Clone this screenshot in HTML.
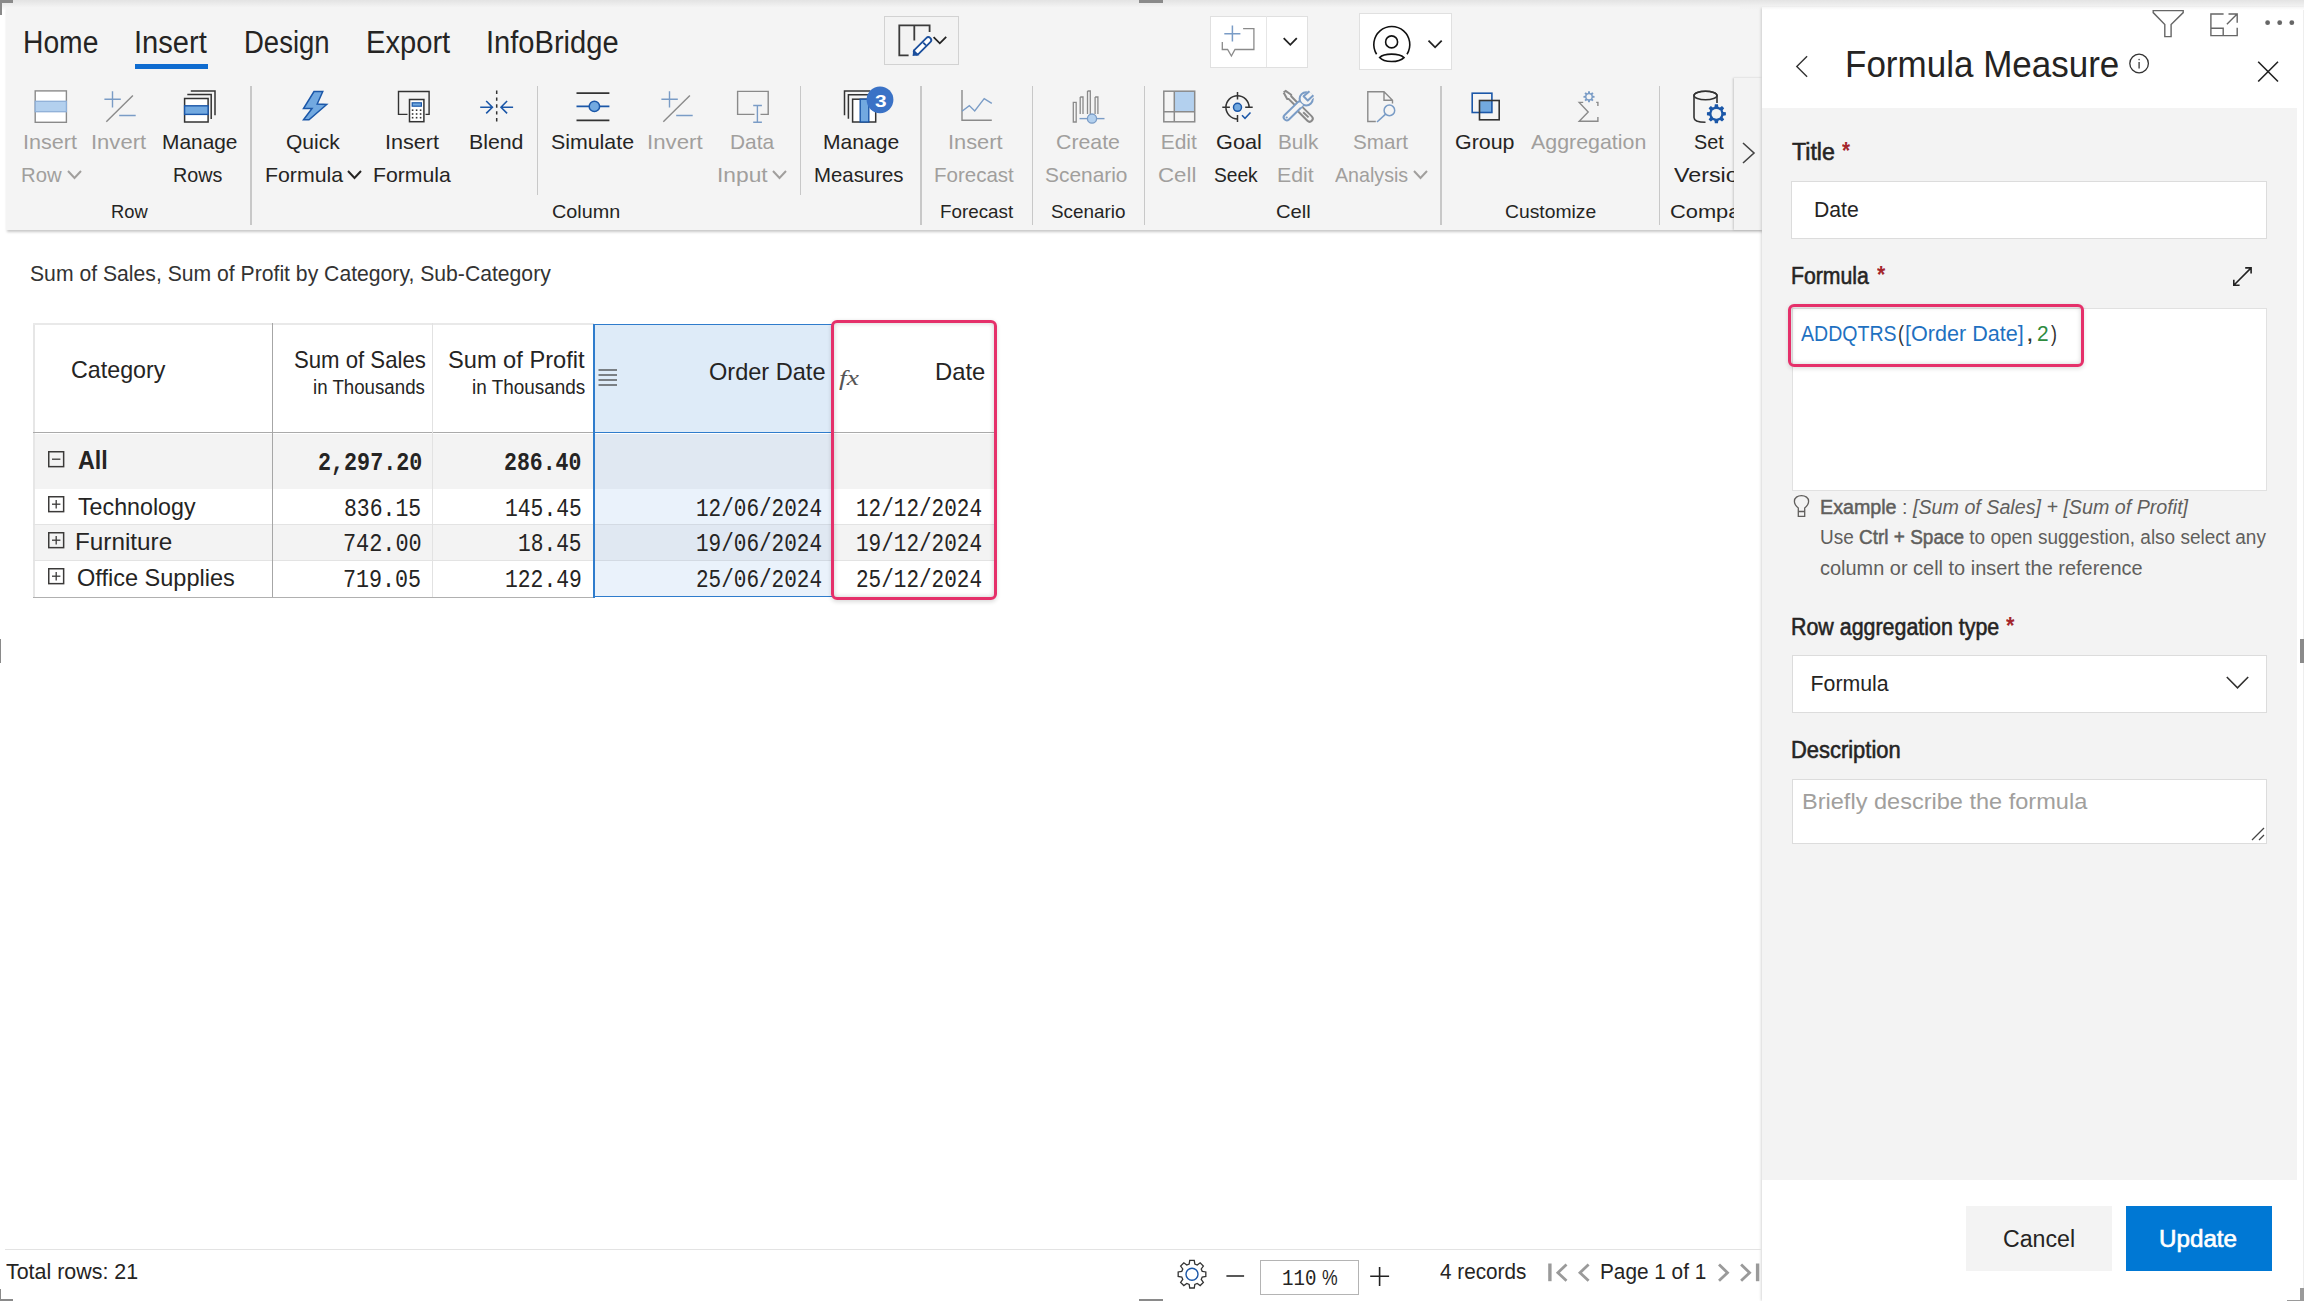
<!DOCTYPE html>
<html><head><meta charset="utf-8"><style>
html,body{margin:0;padding:0;width:2304px;height:1301px;overflow:hidden;background:#fff}
body{position:relative;font-family:'Liberation Sans', sans-serif}
.t{position:absolute;white-space:pre;transform-origin:0 0}
svg{overflow:visible}
</style></head><body>
<div style="position:absolute;left:0px;top:0px;width:2304px;height:10px;background:linear-gradient(#e3e3e3,#eeeeee 50%,#fdfdfd)"></div><div style="position:absolute;left:5.5px;top:6.5px;width:1756px;height:223.5px;background:#f4f4f4;box-shadow:0.5px 1.5px 2.5px rgba(0,0,0,0.22)"></div><div style="position:absolute;left:135px;top:64px;width:73px;height:5px;background:#0f6cd0"></div><div style="position:absolute;left:250.25px;top:86px;width:1.5px;height:139px;background:#c8c8c8"></div><div style="position:absolute;left:536.75px;top:86px;width:1.5px;height:109px;background:#c8c8c8"></div><div style="position:absolute;left:799.75px;top:86px;width:1.5px;height:109px;background:#c8c8c8"></div><div style="position:absolute;left:920.25px;top:86px;width:1.5px;height:139px;background:#c8c8c8"></div><div style="position:absolute;left:1031.75px;top:86px;width:1.5px;height:139px;background:#c8c8c8"></div><div style="position:absolute;left:1143.75px;top:86px;width:1.5px;height:139px;background:#c8c8c8"></div><div style="position:absolute;left:1440.25px;top:86px;width:1.5px;height:139px;background:#c8c8c8"></div><div style="position:absolute;left:1658.75px;top:86px;width:1.5px;height:139px;background:#c8c8c8"></div><svg style="position:absolute;left:65.7px;top:168.8px;" width="17" height="11" viewBox="0 0 17 11" fill="none"><polyline points="2,2 8.5,9 15,2" stroke="#a19f9d" stroke-width="2" fill="none"/></svg><svg style="position:absolute;left:346.2px;top:168.8px;" width="17" height="11" viewBox="0 0 17 11" fill="none"><polyline points="2,2 8.5,9 15,2" stroke="#252423" stroke-width="2" fill="none"/></svg><svg style="position:absolute;left:771.2px;top:168.8px;" width="17" height="11" viewBox="0 0 17 11" fill="none"><polyline points="2,2 8.5,9 15,2" stroke="#a19f9d" stroke-width="2" fill="none"/></svg><svg style="position:absolute;left:1412.0px;top:168.8px;" width="17" height="11" viewBox="0 0 17 11" fill="none"><polyline points="2,2 8.5,9 15,2" stroke="#a19f9d" stroke-width="2" fill="none"/></svg><div style="position:absolute;left:1733.5px;top:77.5px;width:28px;height:152.5px;background:#f3f3f3;box-shadow:-1.5px 0 2px rgba(0,0,0,0.18)"></div><svg style="position:absolute;left:1740px;top:140px;" width="18" height="26" viewBox="0 0 18 26" fill="none"><polyline points="3,3 14,13 3,23" stroke="#444" stroke-width="1.6" fill="none"/></svg><div style="position:absolute;left:884px;top:16px;width:75px;height:49px;border:1px solid #d2d2d2;box-sizing:border-box;background:#f3f3f3"></div><div style="position:absolute;left:1210px;top:15.5px;width:97.5px;height:52px;border:1px solid #e0e0e0;box-sizing:border-box;background:#fff"></div><div style="position:absolute;left:1265.5px;top:16px;width:1px;height:51px;background:#e6e6e6"></div><div style="position:absolute;left:1359px;top:13.3px;width:93px;height:56.7px;border:1px solid #e0e0e0;box-sizing:border-box;background:#fff"></div><div style="position:absolute;left:1761.5px;top:6.5px;width:542.5px;height:1294.5px;background:#fff;box-shadow:-1.5px 0 2.5px rgba(0,0,0,0.16)"></div><div style="position:absolute;left:2302.6px;top:10px;width:1.4px;height:1291px;background:#eeeeee"></div><div style="position:absolute;left:1740px;top:0px;width:564px;height:10px;background:linear-gradient(#e3e3e3,#f0f0f0 55%,rgba(255,255,255,0))"></div><div style="position:absolute;left:1762px;top:107.7px;width:535px;height:1072.6px;background:#f3f3f3"></div><svg style="position:absolute;left:0;top:0" width="2304" height="1301" viewBox="0 0 2304 1301" fill="none"><rect x="35.2" y="90.9" width="31.2" height="31.4" fill="#fff" stroke="#8a8a8a" stroke-width="1.4"/><rect x="35.2" y="101.3" width="31.2" height="10.4" fill="#b3d0ee" stroke="#8fb0d8" stroke-width="1.3"/><path d="M104.4 99.3H120.8M112.5 91.2V107.4M119.2 115.5H135.7" stroke="#7a9cc6" stroke-width="1.4"/><path d="M106.3 121.7L132.9 95.5" stroke="#8a8a8a" stroke-width="1.4"/><path d="M661.4 99.3H677.8M669.5 91.2V107.4M676.2 115.5H692.7" stroke="#7a9cc6" stroke-width="1.4"/><path d="M663.3 121.7L689.9 95.5" stroke="#8a8a8a" stroke-width="1.4"/><path d="M190.8 90.9H215.0V115.3M187.3 94.5H211.2V119.1" stroke="#333" stroke-width="1.5"/><rect x="184.6" y="98.5" width="23.5" height="23.5" fill="#fff" stroke="#333" stroke-width="1.5"/><rect x="184.6" y="105.8" width="23.5" height="8.6" fill="#72a9e0" stroke="#1b57a8" stroke-width="1.4"/><path d="M314.0 91.5L322.75 91.5L317.2 104L326.7 104.5L309 119.7L303.5 119.7L312 108.5L303.5 108.5Z" fill="#72a9e0" stroke="#1b57a8" stroke-width="1.5" stroke-linejoin="miter"/><path d="M407.5 114.4H398.5V91.5H429.1V114.4H425.5" stroke="#333" stroke-width="1.4"/><rect x="409.5" y="99.5" width="14.4" height="22.2" fill="#fff" stroke="#333" stroke-width="1.5"/><rect x="412.2" y="102.8" width="9.2" height="3.4" fill="#72a9e0" stroke="#1b57a8" stroke-width="1.2"/><rect x="411.8" y="109.4" width="1.6" height="1.6" fill="#333"/><rect x="415.8" y="109.4" width="1.6" height="1.6" fill="#333"/><rect x="419.8" y="109.4" width="1.6" height="1.6" fill="#333"/><rect x="411.8" y="113.2" width="1.6" height="1.6" fill="#333"/><rect x="415.8" y="113.2" width="1.6" height="1.6" fill="#333"/><rect x="419.8" y="113.2" width="1.6" height="1.6" fill="#333"/><rect x="411.8" y="116.9" width="1.6" height="1.6" fill="#333"/><rect x="415.8" y="116.9" width="1.6" height="1.6" fill="#333"/><rect x="419.8" y="116.9" width="1.6" height="1.6" fill="#333"/><path d="M496.7 90.5V122.4" stroke="#333" stroke-width="1.5" stroke-dasharray="3.4 3.5"/><path d="M480.2 107.2H492.2M486.2 101L492.4 107.2L486.2 113.4M513.1 107.2H501.4M507.1 101L501.0 107.2L507.1 113.4" stroke="#1b57a8" stroke-width="1.6"/><path d="M576.5 93.1H609.4M576.5 120.3H609.4" stroke="#333" stroke-width="1.7"/><path d="M576.5 106.4H609.4" stroke="#1b57a8" stroke-width="1.6"/><circle cx="594.4" cy="106.4" r="5.2" fill="#72a9e0" stroke="#1b57a8" stroke-width="1.5"/><path d="M754.5 114.4H737.6V91.4H768.2V114.4H760.5" stroke="#8a8a8a" stroke-width="1.4"/><path d="M757.4 105.5V122.2M753.2 105.5H761.9M753.2 122.2H761.9" stroke="#7a9cc6" stroke-width="1.4"/><path d="M844.5 115.2V91H870M848.4 118.8V94.7H872" stroke="#333" stroke-width="1.5"/><rect x="852.6" y="99.2" width="23.1" height="22.8" fill="#fff" stroke="#333" stroke-width="1.5"/><rect x="860.2" y="99.2" width="8.6" height="22.8" fill="#72a9e0" stroke="#1b57a8" stroke-width="1.4"/><circle cx="880" cy="99.8" r="13.4" fill="#3a72c6"/><path d="M962 90V120.2H991.8" stroke="#8a8a8a" stroke-width="1.4"/><path d="M962 111.3L969.3 105.6L974.7 111L984.2 98.6L991.8 103.4" stroke="#7a9cc6" stroke-width="1.4"/><path d="M1073.3 102.3H1076.2V122H1073.3ZM1080.2 97H1083V114M1080.2 114V97M1087.5 91H1090.3V114M1087.5 114V91M1095.1 97H1097.9V114M1095.1 114V97" stroke="#8a8a8a" stroke-width="1.3"/><path d="M1079.5 118.6H1104.5" stroke="#7a9cc6" stroke-width="1.4"/><circle cx="1092" cy="118.6" r="4.6" fill="#b3d0ee" stroke="#7a9cc6" stroke-width="1.3"/><rect x="1174.3" y="91.2" width="20.4" height="20.5" fill="#b3d0ee"/><rect x="1163.8" y="91.2" width="30.9" height="30.6" stroke="#8a8a8a" stroke-width="1.5"/><path d="M1174.3 91.2V121.8M1163.8 111.7H1194.7" stroke="#8a8a8a" stroke-width="1.5"/><path d="M1237.5 95.7A11.6 11.6 0 1 0 1237.5 118.9" stroke="#333" stroke-width="1.5"/><path d="M1237.5 95.7A11.6 11.6 0 0 1 1249.1 107.3" stroke="#333" stroke-width="1.5"/><path d="M1237.5 92.1V99.5M1222.3 107.3H1229.9M1245.2 107.3H1252.7M1237.5 115V122" stroke="#333" stroke-width="1.5"/><circle cx="1237.5" cy="107.3" r="4" fill="#72a9e0" stroke="#1b57a8" stroke-width="1.5"/><path d="M1242 115.2L1245 118.3L1250.5 112.4" stroke="#1b57a8" stroke-width="1.5"/><path d="M1283.6 92.6L1285.6 90.9L1291.2 94.8L1291.2 96.2L1297.5 102.8M1283.6 92.6L1287.2 99.1L1288.8 99.1L1295 105.2" stroke="#8a8a8a" stroke-width="2" stroke-linejoin="round"/><path d="M1299.6 108.6L1309.6 118.6" stroke="#8a8a8a" stroke-width="8.2" stroke-linecap="round"/><path d="M1299.6 108.6L1309.6 118.6" stroke="#f4f4f4" stroke-width="4.199999999999999" stroke-linecap="round"/><path d="M1303.2 112.2L1308.6 117.4" stroke="#8a8a8a" stroke-width="2"/><path d="M1286.8 117.2L1299.8 104.6" stroke="#7a9cc6" stroke-width="8.2" stroke-linecap="round"/><path d="M1286.8 117.2L1299.8 104.6" stroke="#f4f4f4" stroke-width="4.199999999999999" stroke-linecap="round"/><circle cx="1286.7" cy="117.5" r="1.1" fill="#7a9cc6"/><circle cx="1306.2" cy="98.8" r="6.6" fill="#f4f4f4" stroke="#7a9cc6" stroke-width="2"/><polygon points="1303.9,95.9 1308.4,90.4 1315,96.5 1309.6,101.4" fill="#f4f4f4"/><path d="M1309.5 91.2L1303.6 96.3L1307.8 100.6L1313.4 95.3" stroke="#7a9cc6" stroke-width="2" stroke-linejoin="round"/><path d="M1299.2 106.2L1301.6 103.6" stroke="#f4f4f4" stroke-width="4.2"/><path d="M1375.8 121.5H1367.8V91.7H1384L1392.5 100.2V103.5M1384 91.7V100.2H1392.5" stroke="#8a8a8a" stroke-width="1.4"/><circle cx="1389.4" cy="110.4" r="5.3" stroke="#7a9cc6" stroke-width="1.5"/><path d="M1385.6 114.2L1377 122" stroke="#7a9cc6" stroke-width="1.6"/><rect x="1479.5" y="100.5" width="12.4" height="12" fill="#72a9e0"/><rect x="1472.2" y="93.2" width="19.7" height="19.3" stroke="#1b57a8" stroke-width="1.6"/><rect x="1479.5" y="100.5" width="19.7" height="19.3" stroke="#333" stroke-width="1.6"/><path d="M1597.9 106V102.4H1579.2L1588.2 112L1579.2 121.3H1597.9V117" stroke="#8a8a8a" stroke-width="1.4"/><rect x="1583.2" y="100.5" width="13" height="3.8" fill="#f4f4f4"/><polygon points="1592.86,95.73 1594.53,95.90 1594.53,97.70 1592.86,97.87 1592.48,98.77 1593.55,100.07 1592.27,101.35 1590.97,100.28 1590.07,100.66 1589.90,102.33 1588.10,102.33 1587.93,100.66 1587.03,100.28 1585.73,101.35 1584.45,100.07 1585.52,98.77 1585.14,97.87 1583.47,97.70 1583.47,95.90 1585.14,95.73 1585.52,94.83 1584.45,93.53 1585.73,92.25 1587.03,93.32 1587.93,92.94 1588.10,91.27 1589.90,91.27 1590.07,92.94 1590.97,93.32 1592.27,92.25 1593.55,93.53 1592.48,94.83" stroke="#7a9cc6" stroke-width="0" fill="#7a9cc6" stroke-linejoin="miter"/><circle cx="1589" cy="96.8" r="2.5" fill="#f4f4f4"/><path d="M1717 103V95.5A11.5 4.3 0 0 0 1694 95.5V117.5C1694 120.5 1698 122.3 1705.5 122.3" stroke="#333" stroke-width="1.6"/><ellipse cx="1705.5" cy="95.5" rx="11.5" ry="4.3" stroke="#333" stroke-width="1.6"/><polygon points="1723.34,111.88 1725.87,112.25 1725.87,115.35 1723.34,115.72 1722.66,117.35 1724.19,119.40 1722.00,121.59 1719.95,120.06 1718.32,120.74 1717.95,123.27 1714.85,123.27 1714.48,120.74 1712.85,120.06 1710.80,121.59 1708.61,119.40 1710.14,117.35 1709.46,115.72 1706.93,115.35 1706.93,112.25 1709.46,111.88 1710.14,110.25 1708.61,108.20 1710.80,106.01 1712.85,107.54 1714.48,106.86 1714.85,104.33 1717.95,104.33 1718.32,106.86 1719.95,107.54 1722.00,106.01 1724.19,108.20 1722.66,110.25" stroke="#1b57a8" stroke-width="0" fill="#1b57a8" stroke-linejoin="miter"/><circle cx="1716.4" cy="113.8" r="4.9" fill="#f3f3f3"/><path d="M908.6 55.4H899.3V25.4H929.6V32M914.3 25.4V40.5" stroke="#3b3b3b" stroke-width="1.8"/><path d="M916.8 51.6L928.3 40.1" stroke="#1b4f9c" stroke-width="7.6" stroke-linecap="round"/><path d="M916.8 51.6L928.3 40.1" stroke="#fff" stroke-width="4" stroke-linecap="round"/><path d="M913.4 49.2L912.6 56L919.4 55.2Z" fill="#1b4f9c"/><path d="M923.2 42.6L926 45.4" stroke="#1b4f9c" stroke-width="1.8"/><path d="M933.6 37.2L939.8 43.3L946.2 36.9" stroke="#222" stroke-width="1.8"/><path d="M1224.3 33.7H1240.4M1232.4 25.5V41.6" stroke="#7a9cc6" stroke-width="1.5"/><path d="M1243.1 28.6H1253.9V49.5H1235L1231.4 56L1227.6 49.5H1222.3V41.9" stroke="#8a8a8a" stroke-width="1.3"/><path d="M1283.7 38.2L1290.3 44.8L1296.8 38.2" stroke="#222" stroke-width="1.8"/><path d="M1376.6 54.2A18 18 0 1 1 1407 54.2" stroke="#111" stroke-width="1.6"/><circle cx="1391.6" cy="41.9" r="6" stroke="#111" stroke-width="1.6"/><path d="M1379.6 57.6C1384 53 1399 53 1404 57.6C1399 62.8 1384 62.8 1379.6 57.6Z" stroke="#111" stroke-width="1.6"/><path d="M1428.5 40.7L1435.1 47.3L1441.7 40.7" stroke="#222" stroke-width="1.8"/><path d="M2153.2 10.6H2183.2V12.6L2171.1 24.6V36.6H2164.8V24.6L2153.2 12.6Z" stroke="#666" stroke-width="1.4"/><path d="M2223.6 14H2210.9V35.6H2237.2V27.8M2237.2 22.8V14H2228.5M2210.9 28.2H2223.2V35.6M2226.9 24.2L2237.1 14" stroke="#666" stroke-width="1.4"/><circle cx="2267.6" cy="22.7" r="2.4" fill="#666"/><circle cx="2279.7" cy="22.7" r="2.4" fill="#666"/><circle cx="2291.8" cy="22.7" r="2.4" fill="#666"/><path d="M1807.1 56.3L1796.8 66.5L1807.1 76.8" stroke="#333" stroke-width="1.4"/><circle cx="2139.1" cy="63.5" r="9.3" stroke="#333" stroke-width="1.3"/><path d="M2139.1 62V68.5" stroke="#444" stroke-width="1.4"/><circle cx="2139.1" cy="59.6" r="0.8" fill="#444"/><path d="M2258.2 61.7L2278 81.5M2278 61.7L2258.2 81.5" stroke="#222" stroke-width="1.6"/><path d="M2233.8 285.2L2251.1 267.9M2245.2 267.9H2251.1V273.6M2233.8 279.8V285.2H2239.6" stroke="#222" stroke-width="1.6"/><path d="M1798.3 511.5V508C1795.8 506 1794.4 503.6 1794.4 501.3C1794.4 497.8 1797.6 495.6 1801.5 495.6C1805.4 495.6 1808.6 497.8 1808.6 501.3C1808.6 503.6 1807.2 506 1804.7 508V511.5ZM1798.3 511.5V516.3H1804.7V511.5" stroke="#605e5c" stroke-width="1.3"/><polygon points="1202.22,1271.37 1205.82,1271.94 1205.82,1276.46 1202.22,1277.03 1201.22,1279.42 1203.37,1282.37 1200.17,1285.57 1197.22,1283.42 1194.83,1284.42 1194.26,1288.02 1189.74,1288.02 1189.17,1284.42 1186.78,1283.42 1183.83,1285.57 1180.63,1282.37 1182.78,1279.42 1181.78,1277.03 1178.18,1276.46 1178.18,1271.94 1181.78,1271.37 1182.78,1268.98 1180.63,1266.03 1183.83,1262.83 1186.78,1264.98 1189.17,1263.98 1189.74,1260.38 1194.26,1260.38 1194.83,1263.98 1197.22,1264.98 1200.17,1262.83 1203.37,1266.03 1201.22,1268.98" stroke="#333" stroke-width="1.3" fill="none" stroke-linejoin="miter"/><circle cx="1192" cy="1274.2" r="6" stroke="#1b57a8" stroke-width="1.4"/><path d="M1226.4 1276H1244.1M1370.2 1276.2H1389.1M1379.6 1267V1286" stroke="#222" stroke-width="1.6"/><path d="M1549.9 1263.5V1281.2" stroke="#9a9a9a" stroke-width="3.4"/><path d="M1566.5 1264.5L1557.9 1272.7L1566.5 1280.8M1588.6 1264.5L1580 1272.7L1588.6 1280.8M1719 1264.5L1727.5 1272.7L1719 1280.8M1741.1 1264.5L1749.6 1272.7L1741.1 1280.8" stroke="#9a9a9a" stroke-width="2.8"/><path d="M1757.6 1263.5V1281.2" stroke="#9a9a9a" stroke-width="3.4"/></svg><div style="position:absolute;left:1259.8px;top:1259.8px;width:99.7px;height:35.3px;border:1.3px solid #b4b4b4;box-sizing:border-box;background:#fff"></div><div style="position:absolute;left:33.3px;top:323.3px;width:560.5px;height:109.3px;background:#fff"></div><div style="position:absolute;left:33.3px;top:433.5px;width:560.5px;height:55.89999999999998px;background:#f3f3f3"></div><div style="position:absolute;left:33.3px;top:489.4px;width:560.5px;height:34.89999999999998px;background:#fff"></div><div style="position:absolute;left:33.3px;top:524.3px;width:560.5px;height:36.40000000000009px;background:#f3f3f3"></div><div style="position:absolute;left:33.3px;top:560.7px;width:560.5px;height:35.89999999999998px;background:#fff"></div><div style="position:absolute;left:33.3px;top:323.3px;width:1.7px;height:274.2px;background:#e6e6e6"></div><div style="position:absolute;left:33.3px;top:323.3px;width:560.5px;height:1.7px;background:#e9e9e9"></div><div style="position:absolute;left:33.3px;top:431.8px;width:560.5px;height:1.6px;background:#aaaaaa"></div><div style="position:absolute;left:33.3px;top:596.6px;width:560.5px;height:1.6px;background:#b0b0b0"></div><div style="position:absolute;left:33.3px;top:523.8px;width:560.5px;height:1.1px;background:#e3e3e3"></div><div style="position:absolute;left:33.3px;top:560.2px;width:560.5px;height:1.1px;background:#e3e3e3"></div><div style="position:absolute;left:271.6px;top:323.3px;width:1.2px;height:274.2px;background:#a6a6a6"></div><div style="position:absolute;left:431.8px;top:323.3px;width:1.1px;height:274.2px;background:#e2e2e2"></div><div style="position:absolute;left:593.0px;top:323.5px;width:239.5px;height:109.10000000000002px;background:#deebf8"></div><div style="position:absolute;left:593.0px;top:433.5px;width:239.5px;height:55.89999999999998px;background:#e0e8f2"></div><div style="position:absolute;left:593.0px;top:489.4px;width:239.5px;height:34.89999999999998px;background:#eaf2fb"></div><div style="position:absolute;left:593.0px;top:524.3px;width:239.5px;height:36.40000000000009px;background:#e0e8f2"></div><div style="position:absolute;left:593.0px;top:560.7px;width:239.5px;height:35.89999999999998px;background:#eaf2fb"></div><div style="position:absolute;left:593.0px;top:523.8px;width:239.5px;height:1.1px;background:#d3dae3"></div><div style="position:absolute;left:593.0px;top:560.2px;width:239.5px;height:1.1px;background:#d3dae3"></div><div style="position:absolute;left:593.0px;top:323.5px;width:2px;height:274.0px;background:#2f7ccc"></div><div style="position:absolute;left:593.0px;top:323.5px;width:239.5px;height:1.8px;background:#2f7ccc"></div><div style="position:absolute;left:593.0px;top:431.70000000000005px;width:239.5px;height:1.8px;background:#2f7ccc"></div><div style="position:absolute;left:593.0px;top:595.7px;width:239.5px;height:1.8px;background:#2f7ccc"></div><div style="position:absolute;left:832.5px;top:323.5px;width:161.5px;height:109.10000000000002px;background:#fff"></div><div style="position:absolute;left:832.5px;top:433.5px;width:161.5px;height:55.89999999999998px;background:#f3f3f3"></div><div style="position:absolute;left:832.5px;top:489.4px;width:161.5px;height:34.89999999999998px;background:#fff"></div><div style="position:absolute;left:832.5px;top:524.3px;width:161.5px;height:36.40000000000009px;background:#f3f3f3"></div><div style="position:absolute;left:832.5px;top:560.7px;width:161.5px;height:35.89999999999998px;background:#fff"></div><div style="position:absolute;left:832.5px;top:431.8px;width:161.5px;height:1.6px;background:#aaaaaa"></div><div style="position:absolute;left:832.5px;top:523.8px;width:161.5px;height:1.1px;background:#e3e3e3"></div><div style="position:absolute;left:832.5px;top:560.2px;width:161.5px;height:1.1px;background:#e3e3e3"></div><div style="position:absolute;left:832.5px;top:596.6px;width:161.5px;height:1.6px;background:#b0b0b0"></div><div style="position:absolute;left:831.3px;top:320.1px;width:165.9px;height:279.6px;border:3.5px solid #e5306a;border-radius:6px;box-sizing:border-box;box-shadow:0 1.5px 4px rgba(0,0,0,0.14),inset 0 0 5px rgba(0,0,0,0.2)"></div><svg style="position:absolute;left:48px;top:451.1px;" width="16.4" height="16.4" viewBox="0 0 16.4 16.4" fill="none"><rect x="0.75" y="0.75" width="14.9" height="14.9" stroke="#3b3a39" stroke-width="1.5" fill="none"/><line x1="4" y1="8.2" x2="12.4" y2="8.2" stroke="#3b3a39" stroke-width="1.3"/></svg><svg style="position:absolute;left:48px;top:496.3px;" width="16.4" height="16.4" viewBox="0 0 16.4 16.4" fill="none"><rect x="0.75" y="0.75" width="14.9" height="14.9" stroke="#3b3a39" stroke-width="1.5" fill="none"/><line x1="4" y1="8.2" x2="12.4" y2="8.2" stroke="#3b3a39" stroke-width="1.3"/><line x1="8.2" y1="4" x2="8.2" y2="12.4" stroke="#3b3a39" stroke-width="1.3"/></svg><svg style="position:absolute;left:48px;top:532px;" width="16.4" height="16.4" viewBox="0 0 16.4 16.4" fill="none"><rect x="0.75" y="0.75" width="14.9" height="14.9" stroke="#3b3a39" stroke-width="1.5" fill="none"/><line x1="4" y1="8.2" x2="12.4" y2="8.2" stroke="#3b3a39" stroke-width="1.3"/><line x1="8.2" y1="4" x2="8.2" y2="12.4" stroke="#3b3a39" stroke-width="1.3"/></svg><svg style="position:absolute;left:48px;top:568.2px;" width="16.4" height="16.4" viewBox="0 0 16.4 16.4" fill="none"><rect x="0.75" y="0.75" width="14.9" height="14.9" stroke="#3b3a39" stroke-width="1.5" fill="none"/><line x1="4" y1="8.2" x2="12.4" y2="8.2" stroke="#3b3a39" stroke-width="1.3"/><line x1="8.2" y1="4" x2="8.2" y2="12.4" stroke="#3b3a39" stroke-width="1.3"/></svg><svg style="position:absolute;left:598px;top:368.5px;" width="20" height="18" viewBox="0 0 20 18" fill="none"><line x1="0.5" y1="1" x2="19" y2="1" stroke="#444" stroke-width="1.3"/><line x1="0.5" y1="6" x2="19" y2="6" stroke="#444" stroke-width="1.3"/><line x1="0.5" y1="11" x2="19" y2="11" stroke="#444" stroke-width="1.3"/><line x1="0.5" y1="16" x2="19" y2="16" stroke="#444" stroke-width="1.3"/></svg><div style="position:absolute;left:1791.4px;top:181.2px;width:475.4px;height:57.5px;background:#fff;border:1px solid #dcdcdc;box-sizing:border-box"></div><div style="position:absolute;left:1791.8px;top:307.8px;width:475.4px;height:183.4px;background:#fff;border:1px solid #e1e1e1;box-sizing:border-box"></div><div style="position:absolute;left:1791.5px;top:655px;width:475.9px;height:57.8px;background:#fff;border:1px solid #dcdcdc;box-sizing:border-box"></div><svg style="position:absolute;left:2225px;top:675px;" width="25" height="15" viewBox="0 0 25 15" fill="none"><polyline points="1.8,2 12.5,12.8 23.2,2" stroke="#323130" stroke-width="1.6" fill="none"/></svg><div style="position:absolute;left:1791.5px;top:778.7px;width:475.9px;height:64.9px;background:#fff;border:1px solid #dcdcdc;box-sizing:border-box"></div><svg style="position:absolute;left:2250px;top:826px;" width="17" height="16" viewBox="0 0 17 16" fill="none"><line x1="2" y1="14" x2="14" y2="2" stroke="#444" stroke-width="1.3"/><line x1="9" y1="14" x2="14" y2="9" stroke="#444" stroke-width="1.3"/></svg><div style="position:absolute;left:1965.7px;top:1206px;width:145.9px;height:65.4px;background:#f3f3f3"></div><div style="position:absolute;left:2126px;top:1206px;width:145.7px;height:65.4px;background:#0078d4"></div><div style="position:absolute;left:5px;top:1248.5px;width:1756px;height:1.5px;background:#e3e3e3"></div><div style="position:absolute;left:0px;top:0px;width:13px;height:2.5px;background:#8a8a8a"></div><div style="position:absolute;left:0px;top:0px;width:1.5px;height:14.5px;background:#8a8a8a"></div><div style="position:absolute;left:1139px;top:0px;width:24px;height:2.8px;background:#8a8a8a"></div><div style="position:absolute;left:1139px;top:1299.3px;width:24px;height:1.7px;background:#8a8a8a"></div><div style="position:absolute;left:0px;top:639px;width:1.3px;height:24px;background:#8a8a8a"></div><div style="position:absolute;left:2299.7px;top:639px;width:4.3px;height:24px;background:#8a8a8a"></div><div style="position:absolute;left:0px;top:1289px;width:1.3px;height:12px;background:#8a8a8a"></div><div style="position:absolute;left:0px;top:1299.3px;width:13px;height:1.7px;background:#8a8a8a"></div><div style="position:absolute;left:2299.5px;top:1288px;width:4.5px;height:13px;background:#9a9a9a"></div><div style="position:absolute;left:2287.4px;top:1300px;width:16.6px;height:1px;background:#9a9a9a"></div>
<div class="t" style="left:23.18px;top:26.65px;font-size:31px;line-height:31px;color:#252423;transform:scaleX(0.9113);">Home</div><div class="t" style="left:133.98px;top:26.65px;font-size:31px;line-height:31px;color:#252423;transform:scaleX(0.9387);">Insert</div><div class="t" style="left:243.93px;top:26.65px;font-size:31px;line-height:31px;color:#252423;transform:scaleX(0.8871);">Design</div><div class="t" style="left:365.52px;top:26.65px;font-size:31px;line-height:31px;color:#252423;transform:scaleX(0.9398);">Export</div><div class="t" style="left:486.09px;top:26.65px;font-size:31px;line-height:31px;color:#252423;transform:scaleX(0.9380);">InfoBridge</div><div class="t" style="left:22.95px;top:130.85px;font-size:21px;line-height:21px;color:#a19f9d;transform:scaleX(1.0275);">Insert</div><div class="t" style="left:21.23px;top:163.85px;font-size:21px;line-height:21px;color:#a19f9d;transform:scaleX(0.9659);">Row</div><div class="t" style="left:90.90px;top:130.85px;font-size:21px;line-height:21px;color:#a19f9d;transform:scaleX(1.0490);">Invert</div><div class="t" style="left:162.21px;top:130.85px;font-size:21px;line-height:21px;color:#252423;transform:scaleX(0.9946);">Manage</div><div class="t" style="left:173.36px;top:163.85px;font-size:21px;line-height:21px;color:#252423;transform:scaleX(0.9392);">Rows</div><div class="t" style="left:110.84px;top:202.05px;font-size:19px;line-height:19px;color:#252423;transform:scaleX(0.9649);">Row</div><div class="t" style="left:286.00px;top:130.85px;font-size:21px;line-height:21px;color:#252423;">Quick</div><div class="t" style="left:264.69px;top:163.85px;font-size:21px;line-height:21px;color:#252423;transform:scaleX(1.0145);">Formula</div><div class="t" style="left:385.44px;top:130.85px;font-size:21px;line-height:21px;color:#252423;transform:scaleX(1.0294);">Insert</div><div class="t" style="left:372.59px;top:163.85px;font-size:21px;line-height:21px;color:#252423;transform:scaleX(1.0105);">Formula</div><div class="t" style="left:468.89px;top:130.85px;font-size:21px;line-height:21px;color:#252423;transform:scaleX(1.0135);">Blend</div><div class="t" style="left:550.98px;top:130.85px;font-size:21px;line-height:21px;color:#252423;transform:scaleX(1.0162);">Simulate</div><div class="t" style="left:646.88px;top:130.85px;font-size:21px;line-height:21px;color:#a19f9d;transform:scaleX(1.0588);">Invert</div><div class="t" style="left:730.01px;top:130.85px;font-size:21px;line-height:21px;color:#a19f9d;transform:scaleX(0.9932);">Data</div><div class="t" style="left:717.03px;top:163.85px;font-size:21px;line-height:21px;color:#a19f9d;transform:scaleX(1.0844);">Input</div><div class="t" style="left:822.60px;top:130.85px;font-size:21px;line-height:21px;color:#252423;transform:scaleX(1.0027);">Manage</div><div class="t" style="left:814.03px;top:163.85px;font-size:21px;line-height:21px;color:#252423;transform:scaleX(0.9703);">Measures</div><div class="t" style="left:551.76px;top:202.05px;font-size:19px;line-height:19px;color:#252423;transform:scaleX(1.0406);">Column</div><div class="t" style="left:947.92px;top:130.85px;font-size:21px;line-height:21px;color:#a19f9d;transform:scaleX(1.0392);">Insert</div><div class="t" style="left:934.32px;top:163.85px;font-size:21px;line-height:21px;color:#a19f9d;transform:scaleX(0.9765);">Forecast</div><div class="t" style="left:939.81px;top:202.05px;font-size:19px;line-height:19px;color:#252423;transform:scaleX(0.9890);">Forecast</div><div class="t" style="left:1056.49px;top:130.85px;font-size:21px;line-height:21px;color:#a19f9d;transform:scaleX(1.0148);">Create</div><div class="t" style="left:1045.40px;top:163.85px;font-size:21px;line-height:21px;color:#a19f9d;transform:scaleX(0.9951);">Scenario</div><div class="t" style="left:1051.01px;top:202.05px;font-size:19px;line-height:19px;color:#252423;transform:scaleX(0.9932);">Scenario</div><div class="t" style="left:1160.70px;top:130.85px;font-size:21px;line-height:21px;color:#a19f9d;">Edit</div><div class="t" style="left:1158.44px;top:163.85px;font-size:21px;line-height:21px;color:#a19f9d;transform:scaleX(1.0618);">Cell</div><div class="t" style="left:1215.77px;top:130.85px;font-size:21px;line-height:21px;color:#252423;transform:scaleX(1.0333);">Goal</div><div class="t" style="left:1214.39px;top:163.85px;font-size:21px;line-height:21px;color:#252423;transform:scaleX(0.9128);">Seek</div><div class="t" style="left:1277.51px;top:130.85px;font-size:21px;line-height:21px;color:#a19f9d;transform:scaleX(0.9875);">Bulk</div><div class="t" style="left:1277.49px;top:163.85px;font-size:21px;line-height:21px;color:#a19f9d;transform:scaleX(1.0143);">Edit</div><div class="t" style="left:1352.62px;top:130.85px;font-size:21px;line-height:21px;color:#a19f9d;transform:scaleX(0.9836);">Smart</div><div class="t" style="left:1335.00px;top:163.85px;font-size:21px;line-height:21px;color:#a19f9d;transform:scaleX(0.9359);">Analysis</div><div class="t" style="left:1275.54px;top:202.05px;font-size:19px;line-height:19px;color:#252423;transform:scaleX(1.0645);">Cell</div><div class="t" style="left:1455.28px;top:130.85px;font-size:21px;line-height:21px;color:#252423;transform:scaleX(1.0193);">Group</div><div class="t" style="left:1531.30px;top:130.85px;font-size:21px;line-height:21px;color:#a19f9d;transform:scaleX(1.0179);">Aggregation</div><div class="t" style="left:1504.88px;top:202.05px;font-size:19px;line-height:19px;color:#252423;transform:scaleX(1.0159);">Customize</div><div class="t" style="left:1694.06px;top:130.85px;font-size:21px;line-height:21px;color:#252423;transform:scaleX(0.9419);">Set</div><div style="position:absolute;left:0;top:0;width:1733.5px;height:1301px;overflow:hidden"><div class="t" style="left:1673.50px;top:163.85px;font-size:21px;line-height:21px;color:#252423;transform:scaleX(1.1087);">Version</div></div><div style="position:absolute;left:0;top:0;width:1733.5px;height:1301px;overflow:hidden"><div class="t" style="left:1670.35px;top:202.05px;font-size:19px;line-height:19px;color:#252423;transform:scaleX(1.1494);">Compare</div></div><div class="t" style="left:1282.43px;top:1268.98px;font-size:22px;line-height:22px;color:#252423;font-family:'Liberation Mono', monospace;transform:scaleX(0.8684);">110</div><div class="t" style="left:1321.70px;top:1267.00px;font-size:22px;line-height:22px;color:#252423;transform:scaleX(0.8000);">%</div><div class="t" style="left:1440.30px;top:1261.00px;font-size:22px;line-height:22px;color:#252423;transform:scaleX(0.9407);">4 records</div><div class="t" style="left:1599.96px;top:1261.00px;font-size:22px;line-height:22px;color:#252423;transform:scaleX(0.9441);">Page 1 of 1</div><div class="t" style="left:874.50px;top:93.35px;font-size:17px;line-height:17px;color:#fff;font-weight:700;transform:scaleX(1.2222);">3</div><div class="t" style="left:29.72px;top:263.53px;font-size:21.5px;line-height:21.5px;color:#333;transform:scaleX(0.9845);">Sum of Sales, Sum of Profit by Category, Sub-Category</div><div class="t" style="left:70.63px;top:358.30px;font-size:24px;line-height:24px;color:#252423;transform:scaleX(0.9691);">Category</div><div class="t" style="left:293.68px;top:348.40px;font-size:24px;line-height:24px;color:#252423;transform:scaleX(0.9234);">Sum of Sales</div><div class="t" style="left:312.75px;top:378.15px;font-size:19.7px;line-height:19.7px;color:#252423;transform:scaleX(0.9496);">in Thousands</div><div class="t" style="left:448.22px;top:348.40px;font-size:24px;line-height:24px;color:#252423;transform:scaleX(0.9841);">Sum of Profit</div><div class="t" style="left:471.54px;top:378.15px;font-size:19.7px;line-height:19.7px;color:#252423;transform:scaleX(0.9615);">in Thousands</div><div class="t" style="left:708.92px;top:359.60px;font-size:24px;line-height:24px;color:#252423;transform:scaleX(0.9812);">Order Date</div><div class="t" style="left:935.02px;top:359.60px;font-size:24px;line-height:24px;color:#252423;transform:scaleX(0.9917);">Date</div><div class="t" style="left:838.50px;top:366.52px;font-size:22px;line-height:22px;color:#555;font-family:'Liberation Serif', serif;font-style:italic;transform:scaleX(1.2500);">fx</div><div class="t" style="left:77.50px;top:448.25px;font-size:25px;line-height:25px;color:#252423;font-weight:700;transform:scaleX(0.9323);">All</div><div class="t" style="left:77.50px;top:494.60px;font-size:24px;line-height:24px;color:#252423;transform:scaleX(0.9680);">Technology</div><div class="t" style="left:75.48px;top:530.30px;font-size:24px;line-height:24px;color:#252423;transform:scaleX(1.0118);">Furniture</div><div class="t" style="left:77.12px;top:566.00px;font-size:24px;line-height:24px;color:#252423;transform:scaleX(0.9806);">Office Supplies</div><div class="t" style="left:318.05px;top:451.22px;font-size:25.5px;line-height:25.5px;color:#252423;font-weight:700;font-family:'Liberation Mono', monospace;transform:scaleX(0.8517);">2,297.20</div><div class="t" style="left:503.86px;top:451.22px;font-size:25.5px;line-height:25.5px;color:#252423;font-weight:700;font-family:'Liberation Mono', monospace;transform:scaleX(0.8433);">286.40</div><div class="t" style="left:344.04px;top:496.50px;font-size:25px;line-height:25px;color:#252423;font-family:'Liberation Mono', monospace;transform:scaleX(0.8580);">836.15</div><div class="t" style="left:504.65px;top:496.50px;font-size:25px;line-height:25px;color:#252423;font-family:'Liberation Mono', monospace;transform:scaleX(0.8534);">145.45</div><div class="t" style="left:343.15px;top:532.10px;font-size:25px;line-height:25px;color:#252423;font-family:'Liberation Mono', monospace;transform:scaleX(0.8747);">742.00</div><div class="t" style="left:517.90px;top:532.10px;font-size:25px;line-height:25px;color:#252423;font-family:'Liberation Mono', monospace;transform:scaleX(0.8473);">18.45</div><div class="t" style="left:343.16px;top:568.20px;font-size:25px;line-height:25px;color:#252423;font-family:'Liberation Mono', monospace;transform:scaleX(0.8678);">719.05</div><div class="t" style="left:504.65px;top:568.20px;font-size:25px;line-height:25px;color:#252423;font-family:'Liberation Mono', monospace;transform:scaleX(0.8534);">122.49</div><div class="t" style="left:695.86px;top:496.60px;font-size:25px;line-height:25px;color:#252423;font-family:'Liberation Mono', monospace;transform:scaleX(0.8399);">12/06/2024</div><div class="t" style="left:695.86px;top:532.10px;font-size:25px;line-height:25px;color:#252423;font-family:'Liberation Mono', monospace;transform:scaleX(0.8399);">19/06/2024</div><div class="t" style="left:695.86px;top:568.20px;font-size:25px;line-height:25px;color:#252423;font-family:'Liberation Mono', monospace;transform:scaleX(0.8399);">25/06/2024</div><div class="t" style="left:855.56px;top:496.60px;font-size:25px;line-height:25px;color:#252423;font-family:'Liberation Mono', monospace;transform:scaleX(0.8399);">12/12/2024</div><div class="t" style="left:855.56px;top:532.10px;font-size:25px;line-height:25px;color:#252423;font-family:'Liberation Mono', monospace;transform:scaleX(0.8399);">19/12/2024</div><div class="t" style="left:855.56px;top:568.20px;font-size:25px;line-height:25px;color:#252423;font-family:'Liberation Mono', monospace;transform:scaleX(0.8399);">25/12/2024</div><div class="t" style="left:1844.82px;top:46.77px;font-size:36.5px;line-height:36.5px;color:#252423;transform:scaleX(0.9592);">Formula Measure</div><div class="t" style="left:1791.90px;top:140.75px;font-size:23px;line-height:23px;color:#252423;transform:scaleX(1.0071);-webkit-text-stroke:0.55px #252423">Title</div><div class="t" style="left:1841.60px;top:139.95px;font-size:23px;line-height:23px;color:#a4262c;font-weight:700;transform:scaleX(0.9000);">*</div><div class="t" style="left:1814.40px;top:200.30px;font-size:21.3px;line-height:21.3px;color:#252423;transform:scaleX(0.9955);">Date</div><div class="t" style="left:1790.88px;top:264.75px;font-size:23px;line-height:23px;color:#252423;transform:scaleX(0.9226);-webkit-text-stroke:0.55px #252423">Formula</div><div class="t" style="left:1877.00px;top:263.95px;font-size:23px;line-height:23px;color:#a4262c;font-weight:700;transform:scaleX(0.9222);">*</div><div class="t" style="left:1801.10px;top:323.35px;font-size:22.3px;line-height:22.3px;color:#1f71c1;transform:scaleX(0.8769);">ADDQTRS</div><div class="t" style="left:1897.50px;top:323.35px;font-size:22.3px;line-height:22.3px;color:#323130;transform:scaleX(0.8000);">(</div><div class="t" style="left:1905.23px;top:323.35px;font-size:22.3px;line-height:22.3px;color:#1f71c1;transform:scaleX(0.9686);">[Order Date]</div><div class="t" style="left:2026.43px;top:323.35px;font-size:22.3px;line-height:22.3px;color:#323130;transform:scaleX(1.2333);">,</div><div class="t" style="left:2037.06px;top:323.35px;font-size:22.3px;line-height:22.3px;color:#2e8b3e;transform:scaleX(0.9364);">2</div><div class="t" style="left:2051.40px;top:323.35px;font-size:22.3px;line-height:22.3px;color:#323130;transform:scaleX(0.8000);">)</div><div class="t" style="left:1819.89px;top:498.41px;font-size:19.4px;line-height:19.4px;color:#605e5c;transform:scaleX(1.0149);"><span style="-webkit-text-stroke:0.5px #605e5c">Example</span> : <i>[Sum of Sales] + [Sum of Profit]</i></div><div class="t" style="left:1819.92px;top:527.91px;font-size:19.4px;line-height:19.4px;color:#605e5c;transform:scaleX(0.9791);">Use <span style="-webkit-text-stroke:0.5px #605e5c">Ctrl + Space</span> to open suggestion, also select any</div><div class="t" style="left:1819.87px;top:558.51px;font-size:19.4px;line-height:19.4px;color:#605e5c;transform:scaleX(1.0285);">column or cell to insert the reference</div><div class="t" style="left:1791.07px;top:615.75px;font-size:23px;line-height:23px;color:#252423;transform:scaleX(0.9306);-webkit-text-stroke:0.55px #252423">Row aggregation type</div><div class="t" style="left:2006.00px;top:614.95px;font-size:23px;line-height:23px;color:#a4262c;font-weight:700;transform:scaleX(0.9444);">*</div><div class="t" style="left:1810.60px;top:673.79px;font-size:21.3px;line-height:21.3px;color:#252423;">Formula</div><div class="t" style="left:1791.05px;top:738.75px;font-size:23px;line-height:23px;color:#252423;transform:scaleX(0.9531);-webkit-text-stroke:0.55px #252423">Description</div><div class="t" style="left:1801.89px;top:791.89px;font-size:21.3px;line-height:21.3px;color:#a19f9d;transform:scaleX(1.1054);">Briefly describe the formula</div><div class="t" style="left:2002.89px;top:1228.05px;font-size:23px;line-height:23px;color:#252423;transform:scaleX(1.0072);">Cancel</div><div class="t" style="left:2159.40px;top:1228.05px;font-size:23px;line-height:23px;color:#fff;transform:scaleX(1.0521);-webkit-text-stroke:0.6px #fff">Update</div><div class="t" style="left:5.70px;top:1261.62px;font-size:21.5px;line-height:21.5px;color:#252423;transform:scaleX(0.9962);">Total rows: 21</div>
<div style="position:absolute;left:1787.7px;top:303.6px;width:296.1px;height:63.4px;border:3.5px solid #e5306a;border-radius:6px;box-sizing:border-box;box-shadow:0 1.5px 4px rgba(0,0,0,0.12),inset 0 0 5px rgba(0,0,0,0.18)"></div>
</body></html>
